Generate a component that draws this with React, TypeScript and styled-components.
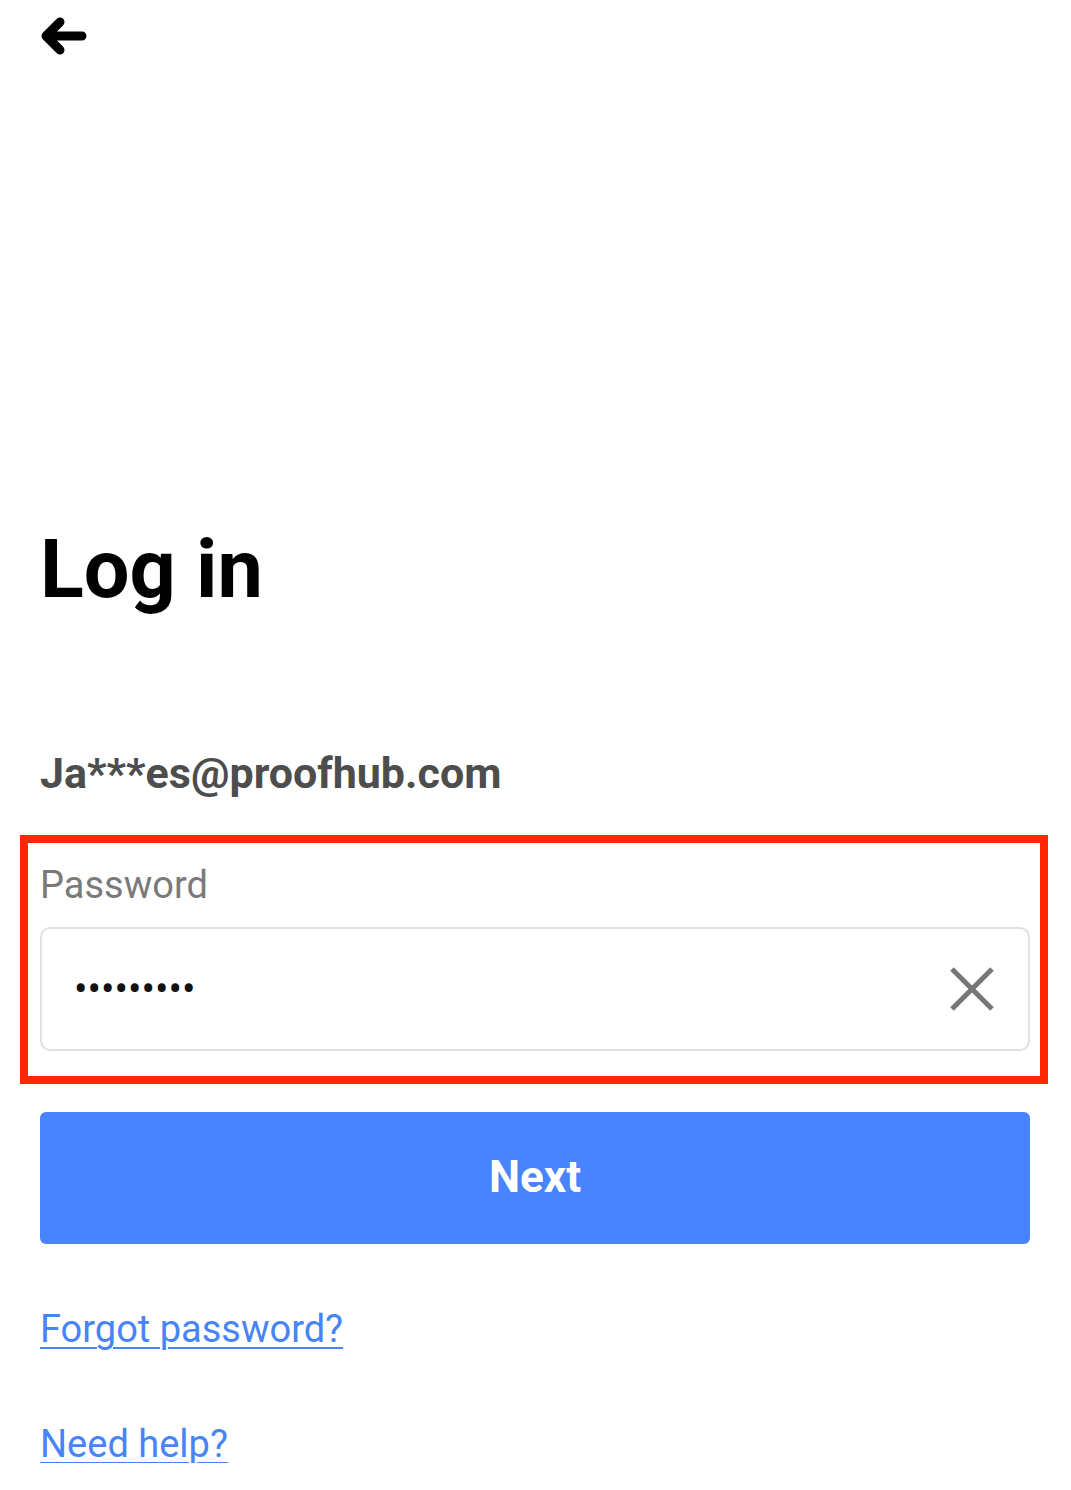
import React from 'react';
import styled, { createGlobalStyle } from 'styled-components';

const GlobalStyle = createGlobalStyle`
  body {
    margin: 0;
    background: #fff;
    font-family: Roboto, "Noto Sans", Arial, sans-serif;
  }
`;

const Page = styled.div`
  width: 990px;
  padding: 0 0 0 40px;
  display: flex;
  flex-direction: column;
`;

const BackButton = styled.button`
  margin: 12px 0 0 -4px;
  padding: 0;
  width: 54px;
  height: 48px;
  border: none;
  background: none;
  cursor: pointer;
  display: block;
`;

const Title = styled.h1`
  margin: 469px 0 0;
  font-size: 81px;
  line-height: 1;
  font-weight: 700;
  color: #000;
`;

const Email = styled.div`
  margin-top: 142px;
  font-size: 43px;
  line-height: 1;
  font-weight: 700;
  color: #4d4d4d;
`;

// the red highlight round the password field
const Highlight = styled.div`
  margin: 40px -18px 0 -20px;
  border: 8px solid #ff2600;
  padding: 23px 10px 25px 12px;
  display: flex;
  flex-direction: column;
  gap: 23px;
`;

const Label = styled.label`
  font-size: 38px;
  line-height: 1;
  color: #7a7a7a;
`;

const Field = styled.div`
  height: 120px;
  border: 2px solid #e0e0e0;
  border-radius: 10px;
  display: flex;
  align-items: center;
  justify-content: space-between;
  padding: 0 33px 0 32px;
`;

const Dots = styled.span`
  font-size: 40px;
  line-height: 1;
  color: #111;
  padding-top: 2px;
`;

const ClearButton = styled.button`
  border: none;
  background: none;
  padding: 0;
  width: 46px;
  height: 46px;
  cursor: pointer;
  display: flex;
`;

const NextButton = styled.button`
  margin-top: 28px;
  height: 132px;
  padding: 0 0 3px;
  border: none;
  border-radius: 6px;
  background: #4884fd;
  color: #fff;
  font-family: Roboto, "Noto Sans", Arial, sans-serif;
  font-size: 44px;
  font-weight: 700;
  cursor: pointer;
`;

const LinkText = styled.a<{ $gap: number }>`
  margin-top: ${p => p.$gap}px;
  align-self: flex-start;
  font-size: 38px;
  line-height: 1;
  color: #4784f6;
  text-decoration: underline;
  text-decoration-thickness: 2px;
  text-underline-offset: 5px;
  cursor: pointer;
`;

const BackArrow = () => (
  <svg width="54" height="48" viewBox="0 0 54 48">
    <path
      d="M46 24 H10 M24 10 L10 24 L24 38"
      fill="none"
      stroke="#000"
      strokeWidth="9"
      strokeLinecap="round"
      strokeLinejoin="round"
    />
  </svg>
);

const CrossIcon = () => (
  <svg width="46" height="46" viewBox="0 0 46 46">
    <path d="M3 3 L43 43 M43 3 L3 43" stroke="#777" strokeWidth="5" />
  </svg>
);

const App: React.FC = () => {
  return (
    <>
      <GlobalStyle />
      <Page>
        <BackButton aria-label="Back">
          <BackArrow />
        </BackButton>
        <Title>Log in</Title>
        <Email>Ja***es@proofhub.com</Email>
        <Highlight>
          <Label>Password</Label>
          <Field>
            <Dots>•••••••••</Dots>
            <ClearButton aria-label="Clear">
              <CrossIcon />
            </ClearButton>
          </Field>
        </Highlight>
        <NextButton>Next</NextButton>
        <LinkText $gap={66}>Forgot password?</LinkText>
        <LinkText $gap={77}>Need help?</LinkText>
      </Page>
    </>
  );
};

export default App;
